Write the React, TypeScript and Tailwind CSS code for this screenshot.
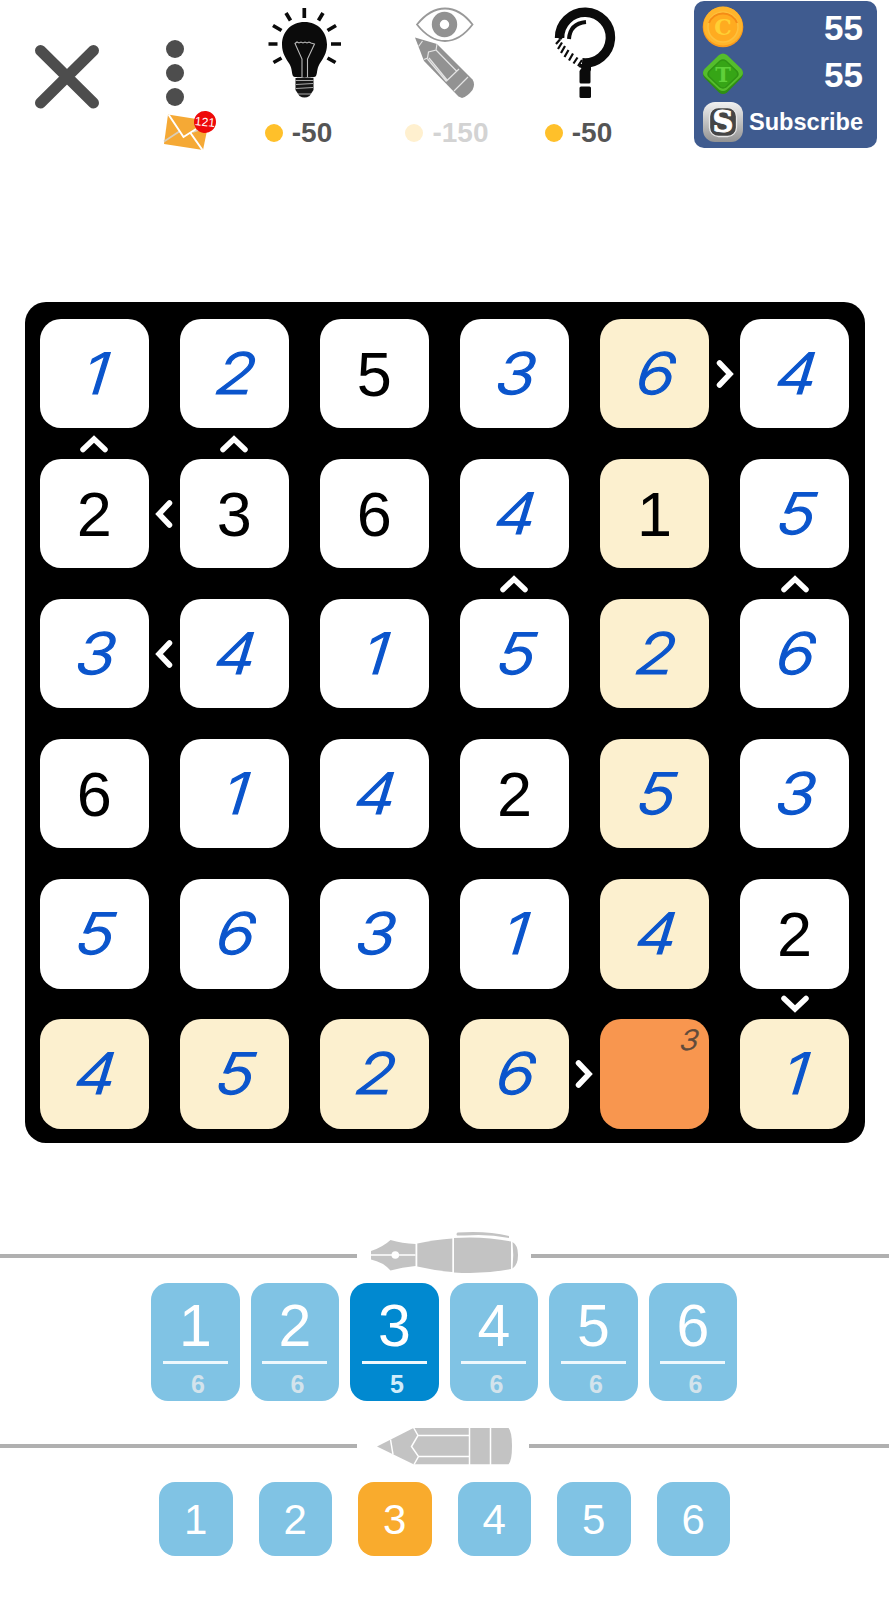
import React from "react";
import clsx from "clsx";

// ─── Board data ───
// "g" = given digit, "." = digit entered with the pen
const GIVENS = ["..g...", "ggg.g.", "......", "g..g..", ".....g", "......"];
const DIGITS = ["125364", "236415", "341526", "614253", "563142", "4526.1"];

type Dir = "left" | "right" | "up" | "down";

// keys are "row-col" on the 11x11 track grid (odd tracks are the gutters)
const SIGNS: Record<string, Dir> = {
  "0-9": "right",
  "1-0": "up",
  "1-2": "up",
  "2-1": "left",
  "3-6": "up",
  "3-10": "up",
  "4-1": "left",
  "9-10": "down",
  "10-7": "right",
};

const SELECTED = { row: 5, col: 4, note: "3" };

const PEN_KEYS = [
  { n: 1, left: 6 },
  { n: 2, left: 6 },
  { n: 3, left: 5 },
  { n: 4, left: 6 },
  { n: 5, left: 6 },
  { n: 6, left: 6 },
];

// ─── Icons ───
function CloseIcon() {
  return (
    <svg width="66" height="66" viewBox="0 0 66 66" stroke="#4d4d4d" strokeWidth="11" strokeLinecap="round">
      <path d="M6.5 6.5 59.5 59M59.5 6.5 6.5 59" />
    </svg>
  );
}

function MailIcon() {
  return (
    <svg width="56" height="42" viewBox="162 109 56 42">
      <path d="M168 114.500 209 121 203 150 164 144Z" fill="#f5a935" />
      <path d="M164 141.500 180 131M203 128.500 193 132" stroke="#d9cdb9" strokeWidth="1.700" fill="none" />
      <path d="M168.500 114.500 183.500 137 196 129M190.500 133 202.500 150" stroke="#fff" strokeWidth="2" fill="none" />
    </svg>
  );
}

function BulbIcon() {
  return (
    <svg width="76" height="92" viewBox="267 7 76 92">
      <path
        d="M268.500 44h9M331 44h10M304.300 8v10M286 13l4.500 7.500M323 13l-4.500 7.500M273 25.500l8.500 5M336 25.500l-8.500 5M273.500 62.500l8-4.500M335.500 62.500l-8-4.500"
        stroke="#0b0b0b"
        strokeWidth="3.700"
      />
      <path
        d="M304.500 22C291 22 282 32 282 44.500c0 9 4 14 7.500 19.500 3 5 2 11 4 12.500 2 1.500 20 1.500 22 0 2-1.500 1-7.500 4-12.500 3.500-5.500 7.500-10.500 7.500-19.500C327 32 318 22 304.500 22Z"
        fill="#0b0b0b"
      />
      <path
        d="M302 77V59l-7-15.500 2-1.500 2 1 2-1 2 1 2-1 2 1 2-1 2 1 3.500 1L307.500 59v18"
        fill="none"
        stroke="#bbb"
        strokeWidth="1.100"
      />
      <path d="M295.500 78h18v12l-4 6q-5 3-10 0l-4-6Z" fill="#161616" />
      <path d="M295.500 80.500h18M296 84.500l17-1M296 88.500l17-1M298 94h13" stroke="#bbb" strokeWidth=".9" />
    </svg>
  );
}

function PeekIcon() {
  return (
    <svg width="60" height="92" viewBox="415 7 60 92">
      <path d="M417 24.500Q430 8.500 445 8.500 460 8.500 472.500 24.500 460 41 445 41 430 41 417 24.500Z" fill="none" stroke="#999" strokeWidth="1.800" />
      <circle cx="444.500" cy="24.500" r="8.700" fill="none" stroke="#929292" strokeWidth="8" />
      <path d="M415 37.500 437 44 472.500 79.500Q475.500 84 472.500 90 467.500 96.500 462 98L458.500 96.500 424 61Z" fill="#929292" />
      <path
        d="M418.500 46.500 422.500 41M424 59.500 427.500 58 428.500 52 436 50 437 44M429 58 447 80M436 50 456.500 71M427.500 59 446.500 81.500M446.500 81 459 69M454 91 468 77"
        fill="none"
        stroke="#e4e4e4"
        strokeWidth="1.200"
      />
    </svg>
  );
}

function LoupeIcon() {
  return (
    <svg width="62" height="92" viewBox="554 7 62 92">
      <path d="M559.600 38A25.400 25.400 0 1 1 582 62.800" fill="none" stroke="#0b0b0b" strokeWidth="9.500" />
      <path d="M555 36H564.300L561 40Z" fill="#0b0b0b" />
      <path d="M569 39Q570 23.500 586 22" fill="none" stroke="#0b0b0b" strokeWidth="4" />
      <path
        d="M556 44l4-4.500M558 49l4-6.500M561 53l4-7M564.500 57l4-7M569 60.500l4-7M573.500 63.500l4-6M578 66l4-6"
        stroke="#0b0b0b"
        strokeWidth="2.200"
      />
      <path d="M580 64h11v6q-.5 1-.5 1.500v10.500q0 1.500-1.500 1.500h-8q-1.500 0-1.500-1.500V71l2-3-3-1Z" fill="#0b0b0b" />
      <rect x="579.500" y="86.500" width="11.500" height="11.500" rx="1.500" fill="#0b0b0b" />
    </svg>
  );
}

function CoinIcon() {
  return (
    <svg width="42" height="42" viewBox="0 0 42 42">
      <circle cx="21" cy="21" r="20.300" fill="#f99a1c" />
      <circle cx="21" cy="20" r="19.500" fill="#ffb52b" />
      <circle cx="21" cy="21" r="15" fill="#ffab20" stroke="#fdc03d" strokeWidth="1.500" />
      <path d="M7 17a15 15 0 0 1 28 0" fill="none" stroke="#f58c16" strokeWidth="2" />
      <text x="21" y="28.500" textAnchor="middle" fontFamily="DejaVu Serif, serif" fontWeight="700" fontSize="22" fill="#ffd034">
        C
      </text>
    </svg>
  );
}

function TokenIcon() {
  return (
    <svg width="42" height="42" viewBox="0 0 42 42">
      <path d="M17 2.500q4-3 8 0L39.500 17q3 4 0 8L25 39.500q-4 3-8 0L2.500 25q-3-4 0-8Z" fill="#2f8f12" />
      <path d="M17 2q4-3 8 0L39.500 16q3 4 0 7L25 36.500q-4 3-8 0L2.500 23q-3-3 0-7Z" fill="#55bd2c" />
      <path d="M18 8q3-2 6 0L35 18.500q2 3 0 5L24 34q-3 2-6 0L7 23.500q-2-2 0-5Z" fill="#36a516" stroke="#2f9314" strokeWidth="1.500" />
      <text x="21" y="28.500" textAnchor="middle" fontFamily="DejaVu Serif, serif" fontWeight="700" fontSize="21" fill="#5fd03a">
        T
      </text>
    </svg>
  );
}

function SubscribeIcon() {
  return (
    <svg width="42" height="42" viewBox="0 0 42 42">
      <defs>
        <linearGradient id="silver" x1="0" y1="0" x2="0" y2="1">
          <stop offset="0" stopColor="#f1f1f1" />
          <stop offset="1" stopColor="#929292" />
        </linearGradient>
      </defs>
      <rect x="1" y="1" width="40" height="40" rx="12" fill="url(#silver)" />
      <rect x="7.500" y="6.500" width="27" height="29" rx="9" fill="#454545" stroke="#e6e6e6" strokeWidth="1.300" />
      <text x="21" y="31" textAnchor="middle" fontFamily="DejaVu Serif, serif" fontWeight="700" fontSize="29" fill="#fff" stroke="#fff" strokeWidth=".8">
        S
      </text>
    </svg>
  );
}

function FountainPenIcon() {
  return (
    <svg width="174" height="44" viewBox="357 1230 174 44" fill="#c3c3c3">
      <path d="M371 1251Q383 1247 390.500 1240 402 1243.500 415.500 1244V1266Q402 1267 390.500 1270.500 383 1262 371 1259.500Z" />
      <path d="M371 1255H415.500" stroke="#fff" strokeWidth="1.500" />
      <circle cx="395.300" cy="1255" r="3.800" fill="#fff" />
      <path d="M417.300 1243.500Q436 1239.500 452.300 1238.500V1272Q434 1270.500 417.300 1266.500Z" />
      <path d="M454 1238Q484 1236 511 1241.500V1269Q484 1274.500 454 1272.500Z" />
      <path d="M512.500 1242Q518 1245 518 1255 518 1265 512.500 1268.500 514 1255 512.500 1242Z" />
      <path d="M457.500 1232.500Q487 1230.500 509 1236V1238Q487 1233.500 465 1235.500H457Q455.500 1234 457.500 1232.500Z" />
    </svg>
  );
}

function PencilIcon() {
  return (
    <svg width="172" height="44" viewBox="357 1424 172 44">
      <path d="M377 1446.500 413.500 1428H508.500Q512 1431.500 512 1446 512 1460.500 508.500 1464.300H413.500Z" fill="#c3c3c3" />
      <path
        d="M390.500 1439.500 393 1454.500M413.500 1427.500 418 1435.500 411.500 1446.500 418.500 1456.500 414 1464.500M418 1435.500H469.500M418.500 1456.500H469.500M469.500 1427V1465M490.500 1427V1465"
        fill="none"
        stroke="#fff"
        strokeWidth="1.500"
      />
    </svg>
  );
}

function Sign({ dir }: { dir: Dir }) {
  const turn = { up: "rotate-0", right: "rotate-90", down: "rotate-180", left: "-rotate-90" }[dir];
  return (
    <svg
      width="30"
      height="20"
      viewBox="0 0 30 20"
      className={clsx("shrink-0", turn)}
      fill="none"
      stroke="#fff"
      strokeWidth="5.500"
      strokeLinecap="round"
    >
      <path d="M4 15.500 15 5 26 15.500" />
    </svg>
  );
}

// ─── Header pieces ───
function Hint({ icon, cost, disabled }: { icon: React.ReactNode; cost: string; disabled?: boolean }) {
  return (
    <button className="flex w-[140px] flex-col items-center">
      {icon}
      <span
        className={clsx(
          "mt-[17px] flex items-center gap-[9px] text-[28px] leading-[33px] font-bold",
          disabled ? "ml-[4px] text-[#d3d3d3]" : "mr-[13px] text-[#555]"
        )}
      >
        <span className={clsx("size-[18px] rounded-full", disabled ? "bg-[#fff0cf]" : "bg-[#ffc02a]")} />
        {cost}
      </span>
    </button>
  );
}

function Wallet() {
  return (
    <div className="mt-px ml-[39px] flex h-[147px] w-[183px] flex-col rounded-[10px] bg-[#3f5b8f] py-[2.500px] pr-[14px] pl-[8px] text-white">
      <div className="flex h-[47px] items-center justify-between">
        <CoinIcon />
        <span className="text-[35px] leading-none font-bold">55</span>
      </div>
      <div className="flex h-[47px] items-center justify-between">
        <TokenIcon />
        <span className="text-[35px] leading-none font-bold">55</span>
      </div>
      <div className="flex h-[47px] items-center justify-between pt-px">
        <SubscribeIcon />
        <span className="pt-[3px] text-[23.600px] leading-none font-bold">Subscribe</span>
      </div>
    </div>
  );
}

// ─── Board ───
function Cell({ row, col }: { row: number; col: number }) {
  const selected = row === SELECTED.row && col === SELECTED.col;
  const lit = row === SELECTED.row || col === SELECTED.col;
  const given = GIVENS[row][col] === "g";

  return (
    <div
      className={clsx(
        "relative flex items-center justify-center rounded-[21px]",
        selected ? "bg-[#f8964f]" : lit ? "bg-[#fcf0cf]" : "bg-white"
      )}
    >
      {selected ? (
        <span className="absolute top-[3px] right-[11px] -skew-x-6 scale-x-110 font-['Inter'] text-[28px] leading-[36px] font-light text-[#5f4a3b] italic [-webkit-text-stroke:0.500px_#5f4a3b]">
          {SELECTED.note}
        </span>
      ) : given ? (
        <span className="pt-[2px] text-[63px] leading-none text-black">{DIGITS[row][col]}</span>
      ) : (
        <span className="ml-[4px] -skew-x-6 scale-x-[1.140] font-['Inter'] text-[57px] leading-none font-light text-[#0b55cc] italic [-webkit-text-stroke:1.200px_#0b55cc]">
          {DIGITS[row][col]}
        </span>
      )}
    </div>
  );
}

function Board() {
  const tracks = Array.from({ length: 11 }, (_, i) => i);
  return (
    <main className="ml-[24.600px] grid h-[840.500px] w-[840px] grid-cols-[repeat(5,109.200px_30.900px)_109.200px] grid-rows-[repeat(5,109.200px_30.900px)_109.200px] rounded-[21px] bg-black pt-[17px] pl-[15px]">
      {tracks.map((r) =>
        tracks.map((c) => {
          const key = `${r}-${c}`;
          if (r % 2 === 0 && c % 2 === 0) return <Cell key={key} row={r / 2} col={c / 2} />;
          return (
            <div key={key} className="flex items-center justify-center">
              {SIGNS[key] && <Sign dir={SIGNS[key]} />}
            </div>
          );
        })
      )}
    </main>
  );
}

export default function App() {
  return (
    <div className="h-[1600px] w-[889px] overflow-hidden bg-white font-['Liberation_Sans',Arial,sans-serif]">
      <header className="flex h-[302px] items-start">
        <button className="mt-[44px] ml-[33.500px]">
          <CloseIcon />
        </button>
        <div className="ml-[62.500px] flex w-[56px] flex-col items-center pt-[40px]">
          <div className="mr-[30px] ml-[4px] flex flex-col gap-[6px] self-start">
            <span className="size-[18px] rounded-full bg-[#4d4d4d]" />
            <span className="size-[18px] rounded-full bg-[#4d4d4d]" />
            <span className="size-[18px] rounded-full bg-[#4d4d4d]" />
          </div>
          <div className="relative mt-[3px]">
            <MailIcon />
            <span className="absolute top-[2px] left-[32px] flex size-[22px] rotate-6 items-center justify-center rounded-full bg-[#ee0a0a] text-[12px] leading-none text-white">
              121
            </span>
          </div>
        </div>
        <div className="ml-[17px] flex pt-[7px]">
          <Hint icon={<BulbIcon />} cost="-50" />
          <Hint icon={<PeekIcon />} cost="-150" disabled />
          <Hint icon={<LoupeIcon />} cost="-50" />
        </div>
        <Wallet />
      </header>

      <Board />

      {/* Pen keys */}
      <div className="mt-[87px] flex h-[44px] items-center">
        <div className="mt-[9px] h-[4px] w-[357px] bg-[#b0b0b0]" />
        <FountainPenIcon />
        <div className="mt-[9px] h-[4px] flex-1 bg-[#b0b0b0]" />
      </div>
      <div className="mt-[9px] ml-[151.200px] flex gap-[10.900px]">
        {PEN_KEYS.map(({ n, left }) => (
          <button
            key={n}
            className={clsx(
              "flex h-[118px] w-[88.600px] flex-col items-center rounded-[17px] text-white",
              n === 3 ? "bg-[#0189d0]" : "bg-[#80c3e4]"
            )}
          >
            <span className="mt-[13px] text-[59px] leading-[60px]">{n}</span>
            <span className="mt-[5px] h-[3px] w-[65px] bg-[#eef8fd]" />
            <span
              className={clsx(
                "mt-[7px] ml-[5px] text-[25px] leading-[26px] font-bold",
                n === 3 ? "text-[#d0ecfa]" : "text-[#d3e3ec]"
              )}
            >
              {left}
            </span>
          </button>
        ))}
      </div>

      {/* Pencil keys */}
      <div className="mt-[23px] flex h-[44px] items-center">
        <div className="h-[4px] w-[357px] bg-[#b0b0b0]" />
        <PencilIcon />
        <div className="h-[4px] flex-1 bg-[#b0b0b0]" />
      </div>
      <div className="mt-[14px] ml-[159px] flex gap-[26px]">
        {PEN_KEYS.map(({ n }) => (
          <button
            key={n}
            className={clsx(
              "flex h-[74px] w-[73.500px] items-center justify-center rounded-[16px] pt-[2px] text-[42px] leading-none text-white",
              n === 3 ? "bg-[#f9ab2d]" : "bg-[#80c3e4]"
            )}
          >
            {n}
          </button>
        ))}
      </div>
    </div>
  );
}
